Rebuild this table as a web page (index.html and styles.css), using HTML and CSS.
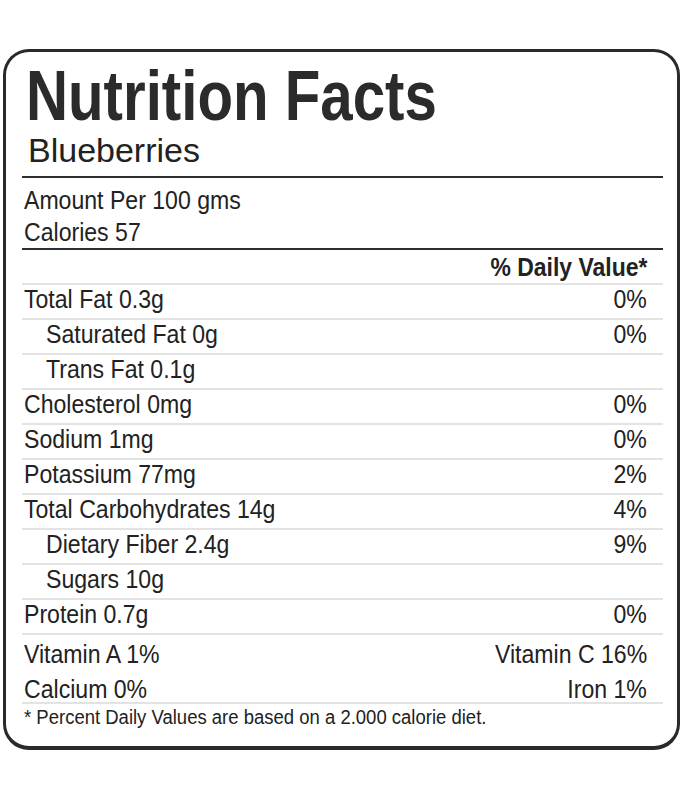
FILE: index.html
```html
<!DOCTYPE html>
<html lang="en">
<head>
<meta charset="utf-8">
<title>Nutrition Facts - Blueberries</title>
<link rel="stylesheet" href="styles.css">
</head>
<body>
<div class="label">
  <h1 class="title"><span class="t">Nutrition Facts</span></h1>
  <div class="product"><span class="t">Blueberries</span></div>
  <div class="serving">
    <div class="line"><span class="t">Amount Per 100 gms</span></div>
    <div class="line"><span class="t">Calories 57</span></div>
  </div>
  <div class="dv-head"><span class="t r">% Daily Value*</span></div>
  <ul class="nutrients">
    <li class="row"><span class="t">Total Fat 0.3g</span><span class="t r">0%</span></li>
    <li class="row sub"><span class="t">Saturated Fat 0g</span><span class="t r">0%</span></li>
    <li class="row sub"><span class="t">Trans Fat 0.1g</span></li>
    <li class="row"><span class="t">Cholesterol 0mg</span><span class="t r">0%</span></li>
    <li class="row"><span class="t">Sodium 1mg</span><span class="t r">0%</span></li>
    <li class="row"><span class="t">Potassium 77mg</span><span class="t r">2%</span></li>
    <li class="row"><span class="t">Total Carbohydrates 14g</span><span class="t r">4%</span></li>
    <li class="row sub"><span class="t">Dietary Fiber 2.4g</span><span class="t r">9%</span></li>
    <li class="row sub"><span class="t">Sugars 10g</span></li>
    <li class="row"><span class="t">Protein 0.7g</span><span class="t r">0%</span></li>
  </ul>
  <div class="vitamins">
    <div class="vrow"><span class="t">Vitamin A 1%</span><span class="t r">Vitamin C 16%</span></div>
    <div class="vrow"><span class="t">Calcium 0%</span><span class="t r">Iron 1%</span></div>
  </div>
  <p class="footnote"><span class="t">* Percent Daily Values are based on a 2.000 calorie diet.</span></p>
</div>
</body>
</html>
```

FILE: styles.css
```css
html, body {
  margin: 0;
  padding: 0;
  background: #ffffff;
}

body {
  padding: 49px 3px 0 3px;
  font-family: "Liberation Sans", Arial, Helvetica, sans-serif;
  color: #222222;
}

.label {
  width: 677px;
  box-sizing: border-box;
  border: 3px solid #2a2a2a;
  border-bottom-width: 4px;
  border-radius: 26px;
  padding: 9px 14px 17px 16px;
}

/* condensed look: Helvetica Condensed is emulated by horizontal scaling */
.t {
  display: inline-block;
  white-space: nowrap;
  transform-origin: left center;
  transform: scaleX(0.905);
}

.t.r {
  transform-origin: right center;
}

.title {
  margin: 0;
  padding-left: 4px;
  font-weight: 700;
  font-size: 71px;
  line-height: 70px;
  color: #2b2b2b;
}

.title .t {
  transform: scaleX(0.82);
}

.product {
  margin-top: 2px;
  padding: 0 0 9px 6px;
  font-size: 34px;
  line-height: 34px;
  border-bottom: 2px solid #2e2e2e;
}

.product .t {
  transform: scaleX(1);
}

.serving {
  padding: 6px 0 0 2px;
  font-size: 25.5px;
  line-height: 32px;
  border-bottom: 2px solid #2e2e2e;
}

.dv-head {
  padding: 4px 16px 3px 0;
  text-align: right;
  font-weight: 700;
  font-size: 25.5px;
  line-height: 26px;
  border-bottom: 2px solid #e3e3e3;
}

.dv-head .t {
  transform: scaleX(0.9);
}

.nutrients {
  list-style: none;
  margin: 0;
  padding: 0;
}

.row {
  display: flex;
  justify-content: space-between;
  padding: 1px 16px 6px 2px;
  font-size: 25.5px;
  line-height: 26px;
  border-bottom: 2px solid #e3e3e3;
}

.row.sub {
  padding-left: 24px;
}

.vitamins {
  display: flex;
  flex-direction: column;
  gap: 9px;
  padding: 6px 16px 0 2px;
  border-bottom: 2px solid #e3e3e3;
}

.vrow {
  display: flex;
  justify-content: space-between;
  font-size: 25.5px;
  line-height: 26px;
}

.footnote {
  margin: 1px 0 0 0;
  padding-left: 2px;
  font-size: 20px;
  line-height: 24px;
}

.footnote .t {
  transform: scaleX(0.925);
}
```
